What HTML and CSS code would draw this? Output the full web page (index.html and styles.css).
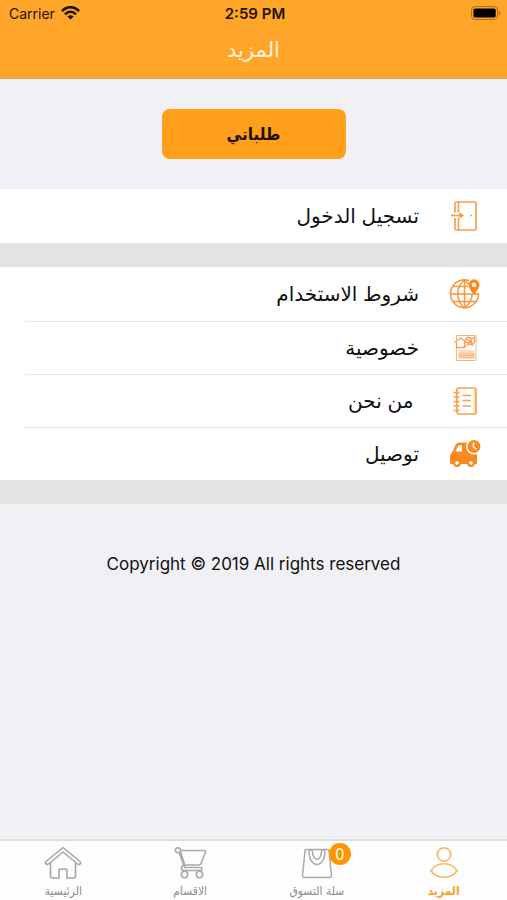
FILE: index.html
```html
<!DOCTYPE html>
<html lang="ar" dir="rtl">
<head>
<meta charset="utf-8">
<meta name="viewport" content="width=device-width, initial-scale=1">
<title>المزيد</title>
<link rel="stylesheet" href="styles.css">
</head>
<body>
<header class="header">
  <div class="status" dir="ltr">
    <div class="carrier">
      <span>Carrier</span>
      <svg width="19" height="14" viewBox="0 0 19 14" fill="none" stroke="#1c1200" stroke-width="2.6">
        <path d="M1 5.2C6-.1 13-.1 18 5.2"/>
        <path d="M4 8.300c3.300-3.300 7.700-3.300 11 0"/>
        <path d="M9.500 13.500 6.400 10.400c1.800-1.700 4.400-1.700 6.200 0z" fill="#1c1200" stroke="none"/>
      </svg>
    </div>
    <time class="clock">2:59 PM</time>
    <svg class="battery" width="30" height="14" viewBox="0 0 30 14">
      <rect x=".6" y=".6" width="26" height="12.800" rx="3.500" fill="none" stroke="#a8690f"/>
      <rect x="2.500" y="2.500" width="22.200" height="9" rx="1.800" fill="#000"/>
      <path d="M28 5v4c2-.8 2-3.200 0-4z" fill="#a8690f"/>
    </svg>
  </div>
  <h1 class="title">المزيد</h1>
</header>

<main class="content">
  <div class="orders"><button class="orders-button" type="button">طلباتي</button></div>

  <nav class="menu">
    <a class="row" href="#login">
      <svg class="icon" viewBox="0 0 32 32" fill="none" stroke="#f9a04a" stroke-width="1.700">
        <path d="M6 12.500V3.500Q6 2 7.500 2h18Q27 2 27 3.500v25q0 1.500-1.500 1.500h-18Q6 30 6 28.500V18M9.500 2v10.500M9.500 18v12"/>
        <path d="M2 15.500h9"/><path d="M10.500 12.500l4.500 3-4.500 3z" fill="#f9902a" stroke="none"/>
        <circle cx="22" cy="15.500" r="1" fill="#f9a04a" stroke="none"/>
      </svg>
      <span class="label">تسجيل الدخول</span>
    </a>
  </nav>

  <nav class="menu">
    <a class="row" href="#terms">
      <svg class="icon" viewBox="0 0 32 32" fill="none" stroke="#f9963a" stroke-width="1.500">
        <path d="M20 2.500A14 14 0 1 0 29.500 15M15.500 2v28M1.500 16h28M4 8.500h15M4 23.500h23.500"/>
        <path d="M15.500 2C6.500 9 6.500 23 15.500 30c5-4 7.500-8 7.500-13.500M15.500 2c2 1.500 3 3 4 4.500"/>
        <path d="M25 17C21.500 12 19.500 9.500 19.500 6.800a5.500 5.500 0 0 1 11 0c0 2.700-2 5.200-5.500 10.200z" fill="#f98a20" stroke="none"/>
        <circle cx="25" cy="6.800" r="2.300" fill="#fff" stroke="none"/>
      </svg>
      <span class="label">شروط الاستخدام</span>
    </a>
    <a class="row" href="#privacy">
      <svg class="icon" viewBox="0 0 32 32" fill="none" stroke="#fbb57a">
        <path d="M7.500 9V3.500h19.500v25H7.500V15"/>
        <path d="M10 21h15v5H10z" fill="#fcd3ae"/>
        <path d="M10 19h15M10 23.500h15"/>
        <path d="M5.500 10.500 11.500 6l6 4.500M7.500 10v5.500h8V10M15.500 9l3-4 4 2 3-2v4l-2 4-4-1-4 3M18 7l5 5M17 11l6-2M21 5l2 7M19 12l4-6" stroke="#fa9f55" stroke-width="1.300"/>
      </svg>
      <span class="label">خصوصية</span>
    </a>
    <a class="row" href="#about">
      <svg class="icon" viewBox="0 0 32 32" fill="none" stroke="#f9a04a" stroke-width="1.700">
        <rect x="8" y="3" width="19" height="26" rx="1.500"/>
        <path d="M25 4v24" stroke="#fcd0a0" stroke-width="1"/>
        <path d="M4.500 7.500h6M4.500 12h6M4.500 16.500h6M4.500 21h6M4.500 25.500h6M13.500 10.500h8.500M13.500 15.500h8.500M13.500 21h8.500"/>
      </svg>
      <span class="label">&nbsp;من نحن</span>
    </a>
    <a class="row" href="#delivery">
      <svg class="icon" viewBox="0 0 32 32">
        <path d="M1 17 3 14.500 6.500 7Q7.500 4.500 10 4.500h8.500c-1 6 3.500 11.500 9.500 10.500v10q0 1-1 1H2q-1 0-1-1z" fill="#f98a20"/>
        <path d="M6.500 13.500l2.500-5.500q.3-.8 1.200-.8H13v6.300z" fill="#fff"/>
        <circle cx="8" cy="25" r="4" fill="#f98a20"/><circle cx="22" cy="25" r="4" fill="#f98a20"/>
        <circle cx="8" cy="25" r="1.800" fill="#fff"/><circle cx="22" cy="25" r="1.800" fill="#fff"/>
        <circle cx="25" cy="8.500" r="8" fill="#fff"/><circle cx="25" cy="8.500" r="6.500" fill="#f98a20"/>
        <path d="M24.500 4.500v4.500l3 2.500" fill="none" stroke="#fff" stroke-width="1.500"/>
      </svg>
      <span class="label">توصيل</span>
    </a>
  </nav>

  <p class="copyright" dir="ltr">Copyright © 2019 All rights reserved</p>
</main>

<nav class="tabs">
  <a class="tab tab-active" href="#more">
    <svg class="tab-icon" viewBox="0 0 38 34" fill="none" stroke="#fdb766" stroke-width="1.700">
      <circle cx="19" cy="8.500" r="6.700"/>
      <path d="M6 24.500c6-9 20-9 26 0-5 9-21 9-26 0z"/>
    </svg>
    <span>المزيد</span>
  </a>
  <a class="tab" href="#cart">
    <span class="tab-picture">
      <svg class="tab-icon" viewBox="0 0 38 34" fill="none" stroke="#aaa" stroke-width="1.500">
        <path d="M7 4.500Q7 3.500 8 3.500h22q1 0 1 1l2.500 25.500q0 1.500-1.500 1.500H6q-1.500 0-1.500-1.500z"/>
        <path d="M11 5c0 18 16 18 16 0M14.500 5c0 11 9 11 9 0M11 5q1.800-2.500 3.500 0M23.500 5q1.800-2.500 3.500 0"/>
      </svg>
      <span class="badge">0</span>
    </span>
    <span>سلة التسوق</span>
  </a>
  <a class="tab" href="#categories">
    <svg class="tab-icon" viewBox="0 0 38 34" fill="none" stroke="#aaa" stroke-width="1.600">
      <path d="M9 4.500h24.500q1.500 0 1 1.500L30 17.500q-.5 1.500-2 1.500H14.500"/>
      <path d="M9.500 3Q7 1 5 2.500 3 5 6 6.500h2l4.500 12-2 2.500q-.5 3 2 3.500H30q2-1.500 0-3H13.500q-.8-1 .5-2L9.500 6z"/>
      <circle cx="13.500" cy="28.500" r="3.200"/><circle cx="28.500" cy="28.500" r="3.200"/>
    </svg>
    <span>الاقسام</span>
  </a>
  <a class="tab" href="#home">
    <svg class="tab-icon" viewBox="0 0 38 34" fill="none" stroke="#a6a6a6" stroke-width="1.600" stroke-linejoin="round">
      <path d="M19 1.500 2 15.500q-1 1.500 0 2.500 1.300 1 2.500 0L19 6l14.500 12q1.200 1 2.500 0 1-1 0-2.500z"/>
      <path d="M6.500 17v13q0 2 2 2H15v-7q0-2 2-2h4q2 0 2 2v7h6.500q2 0 2-2V17"/>
    </svg>
    <span>الرئيسية</span>
  </a>
</nav>
</body>
</html>
```
FILE: styles.css
```css
* {
  box-sizing: border-box;
}

body {
  display: flex;
  flex-direction: column;
  min-height: 100vh;
  margin: 0;
  background: #f0f0f5;
  color: #111;
  font-family: Inter, "DejaVu Sans", sans-serif;
}

a {
  color: inherit;
  text-decoration: none;
}

.header {
  padding-bottom: 4px;
  border-bottom: 1px solid #d9a766;
  background: #ffa52a;
}

.status {
  display: grid;
  grid-template-columns: 1fr auto 1fr;
  align-items: center;
  height: 26px;
  padding: 0 6px 0 9px;
  color: #1c1200;
  font-size: 14px;
}

.carrier {
  display: flex;
  align-items: center;
  gap: 6px;
}

.clock {
  font-size: 15px;
  font-weight: 600;
}

.battery {
  justify-self: end;
}

.title {
  margin: 0;
  color: #fff3df;
  font-size: 21px;
  font-weight: 400;
  line-height: 48px;
  text-align: center;
}

.content {
  flex: 1;
}

.orders {
  display: flex;
  justify-content: center;
  padding: 30px 0;
}

.orders-button {
  width: 184px;
  height: 50px;
  padding: 0;
  border: 0;
  border-radius: 8px;
  background: #ff9f1c;
  color: #1c1200;
  font: 700 17px "DejaVu Sans Condensed", "DejaVu Sans", sans-serif;
}

.menu {
  border-bottom: 24px solid #e3e3e3;
  background: #fff;
}

.row {
  display: flex;
  align-items: center;
  gap: 30px;
  height: 54px;
  padding-right: 26px;
}

.row + .row {
  height: 53px;
  background: linear-gradient(#e6e6e8, #e6e6e8) right top / calc(100% - 25px) 1px no-repeat;
}

.icon {
  width: 32px;
  height: 32px;
}

.label {
  font-size: 20px;
  line-height: 30px;
}

.copyright {
  margin: 48px 0 0;
  font-size: 17px;
  line-height: 24px;
  text-align: center;
}

.tabs {
  display: grid;
  grid-template-columns: repeat(4, 1fr);
  height: 61px;
  border-top: 2px solid #dedee2;
  background: #fdfdfd;
}

.tab {
  display: flex;
  flex-direction: column;
  align-items: center;
  padding-top: 5px;
  color: #8e8e8e;
  font: 12px/22px "DejaVu Sans Condensed", "DejaVu Sans", sans-serif;
}

.tab-active {
  color: #fda02e;
  font-weight: 700;
}

.tab-picture {
  position: relative;
  display: flex;
}

.tab-icon {
  width: 38px;
  height: 34px;
}

.badge {
  position: absolute;
  top: -3px;
  right: -15px;
  width: 22px;
  height: 22px;
  border-radius: 50%;
  background: #ff9500;
  color: #fff;
  font: 16px/22px "Noto Sans", sans-serif;
  text-align: center;
}
```
